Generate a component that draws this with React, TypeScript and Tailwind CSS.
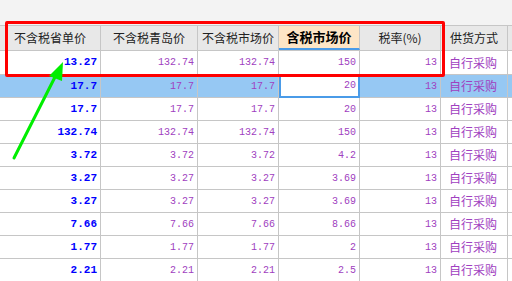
import React from "react";

const rows = [
  ["13.27", "132.74", "132.74", "150", "13"],
  ["17.7", "17.7", "17.7", "20", "13"],
  ["17.7", "17.7", "17.7", "20", "13"],
  ["132.74", "132.74", "132.74", "150", "13"],
  ["3.72", "3.72", "3.72", "4.2", "13"],
  ["3.27", "3.27", "3.27", "3.69", "13"],
  ["3.27", "3.27", "3.27", "3.69", "13"],
  ["7.66", "7.66", "7.66", "8.66", "13"],
  ["1.77", "1.77", "1.77", "2", "13"],
  ["2.21", "2.21", "2.21", "2.5", "13"],
];

const cjk = "font-['Noto_Sans_CJK_SC',sans-serif]";
const mono = "font-['Liberation_Mono',monospace]";

const App = () => {
  return (
    <div className="relative w-[512px] h-[281px] overflow-hidden bg-white">
      <div className="h-[25px] bg-[#f3f3f3]" />

      {/* header */}
      <div className={`flex h-[26px] border-y border-[#c6c6c6] bg-[#e8e8e8] text-[12px] text-[#222] ${cjk}`}>
        <div className="w-[101px] shrink-0 border-r border-[#c6c6c6] flex items-center justify-center">不含税省单价</div>
        <div className="w-[97px] shrink-0 border-r border-[#c6c6c6] flex items-center justify-center">不含税青岛价</div>
        <div className="w-[81px] shrink-0 border-r border-[#c6c6c6] flex items-center justify-center">不含税市场价</div>
        <div className="w-[81px] shrink-0 border-r border-[#c6c6c6] border-b-2 border-b-[#4a9be8] bg-[#fde5c6] flex items-center justify-center font-bold text-[13px] text-black">含税市场价</div>
        <div className="w-[81px] shrink-0 border-r border-[#c6c6c6] flex items-center justify-center">税率(%)</div>
        <div className="w-[67px] shrink-0 border-r border-[#c6c6c6] flex items-center justify-center">供货方式</div>
        <div className="flex-1" />
      </div>

      {rows.map((r, i) => {
        const sel = i === 1;
        return (
          <div
            key={i}
            className={`flex border-b border-[#c6c6c6] ${i === 0 ? "h-[24px]" : "h-[23px]"} ${sel ? "bg-[#96c8f3]" : "bg-white"}`}
          >
            <div className={`w-[101px] shrink-0 border-r border-[#c6c6c6] flex items-center justify-end pr-[3px] text-[11px] font-bold text-[#0000ff] ${mono}`}>
              {r[0]}
            </div>
            <div className={`w-[97px] shrink-0 border-r border-[#c6c6c6] flex items-center justify-end pr-[3px] text-[10px] text-[#a040c0] ${mono}`}>
              {r[1]}
            </div>
            <div className={`w-[81px] shrink-0 border-r border-[#c6c6c6] flex items-center justify-end pr-[3px] text-[10px] text-[#a040c0] ${mono}`}>
              {r[2]}
            </div>
            <div
              className={`w-[81px] shrink-0 flex items-center justify-end text-[10px] text-[#a040c0] ${mono} ${
                sel ? "bg-white border-x-2 border-b-2 border-[#4a9be8] pr-[2px] -mb-px" : "border-r border-[#c6c6c6] pr-[3px]"
              }`}
            >
              {r[3]}
            </div>
            <div className={`w-[81px] shrink-0 border-r border-[#c6c6c6] flex items-center justify-end pr-[3px] text-[10px] text-[#a040c0] ${mono}`}>
              {r[4]}
            </div>
            <div className={`w-[67px] shrink-0 border-r border-[#c6c6c6] flex items-center pl-[8px] text-[12px] text-[#a040c0] ${cjk}`}>
              自行采购
            </div>
            <div className="flex-1" />
          </div>
        );
      })}

      {/* red highlight box */}
      <div className="absolute left-[5px] top-[21px] w-[440px] h-[56px] border-[3px] border-[#ff0000] rounded-[2px] pointer-events-none" />

      {/* green arrow */}
      <svg className="absolute left-0 top-0 pointer-events-none" width="512" height="281">
        <line x1="14" y1="158" x2="55" y2="77" stroke="#00ee00" strokeWidth="3" strokeLinecap="round" />
        <polygon points="63,62 49,76 62,81" fill="#00ee00" />
      </svg>
    </div>
  );
};

export default App;
